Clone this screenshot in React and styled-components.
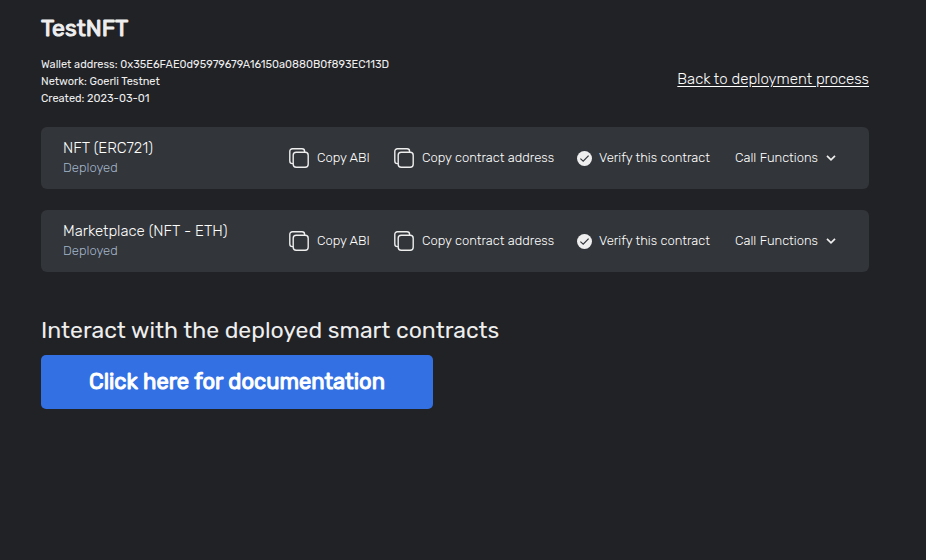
import React from "react";
import styled, { createGlobalStyle } from "styled-components";

const GlobalStyle = createGlobalStyle`
  *, *::before, *::after { box-sizing: border-box; }
  body {
    margin: 0;
    background: #212226;
    color: #eeeeee;
    font-family: Rubik, Roboto, "Liberation Sans", sans-serif;
    font-weight: 400;
  }
`;

const Page = styled.main`
  padding: 14px 57px 40px 41px;
`;

const Title = styled.h1`
  margin: 0;
  font-size: 23px;
  line-height: 28px;
  font-weight: 400;
  -webkit-text-stroke: 1px currentColor;
`;

const Summary = styled.header`
  display: flex;
  justify-content: space-between;
  align-items: center;
  margin-top: 14px;
`;

const Details = styled.div`
  font-size: 11px;
  line-height: 17px;
`;

const Detail = styled.p`
  margin: 0;
`;

const BackLink = styled.a`
  color: #ffffff;
  font-size: 15px;
  line-height: 20px;
  font-weight: 300;
  margin-bottom: 5px;
  text-underline-offset: 2px;
`;

const ContractList = styled.ul`
  list-style: none;
  margin: 20px 0 0;
  padding: 0;
  display: grid;
  gap: 21px;
  color: #ffffff;
  font-weight: 300;
`;

const ContractRow = styled.li`
  display: grid;
  grid-template-columns: 1fr 105px 183px 158px 102px;
  align-items: center;
  min-height: 62px;
  padding: 11px 32px 11px 22px;
  border-radius: 6px;
  background: #323539;
`;

const ContractName = styled.h2`
  margin: 0;
  font-size: 15px;
  line-height: 20px;
  font-weight: inherit;
`;

const Status = styled.p`
  margin: 0;
  font-size: 13px;
  line-height: 20px;
  color: #a3b4ca;
`;

const Action = styled.button`
  display: flex;
  align-items: center;
  gap: ${(p) => p.$gap}px;
  padding: 0;
  border: 0;
  background: none;
  color: inherit;
  font: inherit;
  font-size: 13px;
  line-height: 20px;
  white-space: nowrap;
  cursor: pointer;
`;

const ActionLabel = styled.span`
  padding-bottom: 1px;
`;

const Icon = styled.svg`
  flex: none;
  display: block;
`;

const Interact = styled.section`
  margin-top: 44px;
`;

const SectionTitle = styled.h2`
  margin: 0 0 11px;
  font-size: 23px;
  line-height: 28px;
  font-weight: inherit;
`;

const DocsLink = styled.a`
  display: flex;
  align-items: center;
  justify-content: center;
  width: 392px;
  max-width: 100%;
  min-height: 54px;
  border-radius: 5px;
  background: #3370e4;
  color: #ffffff;
  font-size: 22px;
  line-height: 28px;
  font-weight: 400;
  -webkit-text-stroke: 1px currentColor;
  text-decoration: none;
`;

const CopyIcon = () => (
  <Icon width="20" height="20" viewBox="0 0 20 20" fill="none" stroke="#eeeeee" strokeWidth="1.4" aria-hidden="true">
    <rect x="4.2" y="4.2" width="15" height="15" rx="3" />
    <path d="M4.2 15.6H3.4A2.6 2.6 0 0 1 .8 13V3.4A2.6 2.6 0 0 1 3.4.8H13a2.6 2.6 0 0 1 2.6 2.6v.8" />
  </Icon>
);

const CheckIcon = () => (
  <Icon width="15" height="15" viewBox="0 0 15 15" fill="none" aria-hidden="true">
    <circle cx="7.5" cy="7.5" r="7.5" fill="#eeeeee" />
    <path d="M3.4 7.6 6.2 10.2 11.6 4.6" stroke="#323539" strokeWidth="1.2" />
  </Icon>
);

const ChevronIcon = () => (
  <Icon width="10" height="8" viewBox="0 0 10 8" fill="none" aria-hidden="true">
    <path d="M1 1.8 5 5.8 9 1.8" stroke="#eeeeee" strokeWidth="1.7" />
  </Icon>
);

const contracts = ["NFT (ERC721)", "Marketplace (NFT - ETH)"];

const Contract = ({ name }) => (
  <ContractRow>
    <div>
      <ContractName>{name}</ContractName>
      <Status>Deployed</Status>
    </div>
    <Action type="button" $gap={8}>
      <CopyIcon />
      <ActionLabel>Copy ABI</ActionLabel>
    </Action>
    <Action type="button" $gap={8}>
      <CopyIcon />
      <ActionLabel>Copy contract address</ActionLabel>
    </Action>
    <Action type="button" $gap={7}>
      <CheckIcon />
      <ActionLabel>Verify this contract</ActionLabel>
    </Action>
    <Action type="button" aria-haspopup="menu" $gap={8}>
      <ActionLabel>Call Functions</ActionLabel>
      <ChevronIcon />
    </Action>
  </ContractRow>
);

export default function App() {
  return (
    <>
      <GlobalStyle />
      <Page>
        <Title>TestNFT</Title>
        <Summary>
          <Details>
            <Detail>Wallet address: 0x35E6FAE0d95979679A16150a0880B0f893EC113D</Detail>
            <Detail>Network: Goerli Testnet</Detail>
            <Detail>Created: 2023-03-01</Detail>
          </Details>
          <BackLink href="#deployment">Back to deployment process</BackLink>
        </Summary>
        <ContractList>
          {contracts.map((name) => <Contract key={name} name={name} />)}
        </ContractList>
        <Interact>
          <SectionTitle>Interact with the deployed smart contracts</SectionTitle>
          <DocsLink href="#documentation">Click here for documentation</DocsLink>
        </Interact>
      </Page>
    </>
  );
}
